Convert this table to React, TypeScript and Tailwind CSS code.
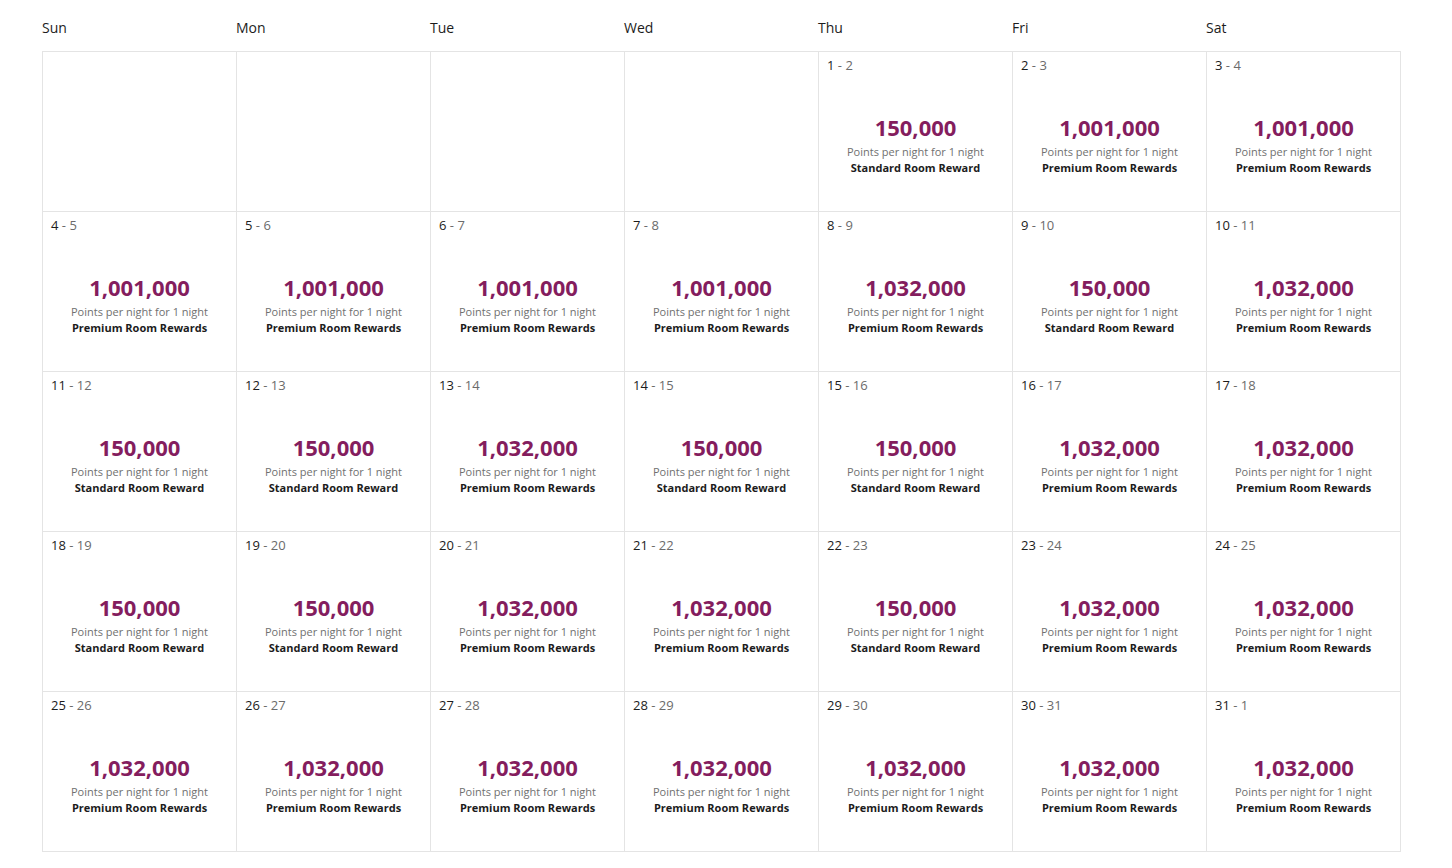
const DAYS = ['Sun', 'Mon', 'Tue', 'Wed', 'Thu', 'Fri', 'Sat']

type Cell = { from: number; to: number; points: string; premium: boolean } | null

const P = (from: number, to: number, points: string): Cell => ({ from, to, points, premium: true })
const S = (from: number, to: number): Cell => ({ from, to, points: '150,000', premium: false })

const CELLS: Cell[] = [
  null, null, null, null,
  S(1, 2), P(2, 3, '1,001,000'), P(3, 4, '1,001,000'),
  P(4, 5, '1,001,000'), P(5, 6, '1,001,000'), P(6, 7, '1,001,000'), P(7, 8, '1,001,000'),
  P(8, 9, '1,032,000'), S(9, 10), P(10, 11, '1,032,000'),
  S(11, 12), S(12, 13), P(13, 14, '1,032,000'), S(14, 15), S(15, 16),
  P(16, 17, '1,032,000'), P(17, 18, '1,032,000'),
  S(18, 19), S(19, 20), P(20, 21, '1,032,000'), P(21, 22, '1,032,000'), S(22, 23),
  P(23, 24, '1,032,000'), P(24, 25, '1,032,000'),
  P(25, 26, '1,032,000'), P(26, 27, '1,032,000'), P(27, 28, '1,032,000'), P(28, 29, '1,032,000'),
  P(29, 30, '1,032,000'), P(30, 31, '1,032,000'), P(31, 1, '1,032,000'),
]

function DayCell({ cell }: { cell: Cell }) {
  if (!cell) return <div className="h-[160px] border-r border-b border-[#e4e4e4]" />

  return (
    <div className="flex h-[160px] flex-col border-r border-b border-[#e4e4e4] px-2 pt-[5px]">
      <div className="text-[13px] leading-4">
        <span className="text-[#1c1c1c]">{cell.from}</span>
        <span className="text-[#6b6b6b]"> - {cell.to}</span>
      </div>
      <div className="mt-[40px] flex flex-col items-center">
        <div className="text-[22px] leading-7 font-bold text-[#841d5e]">{cell.points}</div>
        <div className="mt-[3px] text-[11px] leading-4 text-[#707070]">Points per night for 1 night</div>
        <div className="text-[11px] leading-4 font-bold text-[#1c1c1c]">
          {cell.premium ? 'Premium Room Rewards' : 'Standard Room Reward'}
        </div>
      </div>
    </div>
  )
}

export default function App() {
  return (
    <div className="min-h-screen bg-white pl-[42px] font-['Open_Sans',sans-serif]">
      {/* Weekday header */}
      <div className="grid grid-cols-[repeat(7,194px)]">
        {DAYS.map((d) => (
          <div key={d} className="pt-[18px] pb-[13px] text-[14px] leading-5 text-[#1c1c1c]">
            {d}
          </div>
        ))}
      </div>

      {/* Month grid */}
      <div className="grid w-fit grid-cols-[repeat(7,194px)] border-t border-l border-[#e4e4e4]">
        {CELLS.map((c, i) => (
          <DayCell key={i} cell={c} />
        ))}
      </div>
    </div>
  )
}
